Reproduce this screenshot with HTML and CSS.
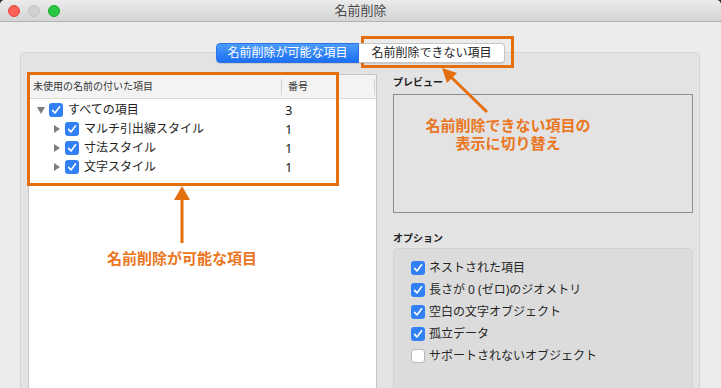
FILE: index.html
```html
<!DOCTYPE html>
<html lang="ja">
<head>
  <meta charset="UTF-8">
  <title>名前削除</title>
  <link rel="stylesheet" href="styles.css">
</head>
<body>
  <div class="window">
    <div class="titlebar">
      <div class="lights">
        <span class="light red"></span>
        <span class="light off"></span>
        <span class="light green"></span>
      </div>
      <div class="title">名前削除</div>
      <div></div>
    </div>

    <div class="tabs">
      <div class="tab active">名前削除が可能な項目</div>
      <div class="tab">名前削除できない項目</div>
    </div>

    <div class="panel">
      <div class="tree">
        <div class="tree-head">
          <div class="col-name">未使用の名前の付いた項目</div>
          <span class="sep"></span>
          <div class="col-num">番号</div>
          <span class="sep"></span>
        </div>
        <div class="rows">
          <div class="row">
            <div class="name lvl0"><span class="tri down"></span><span class="check on"></span>すべての項目</div>
            <div class="num">3</div>
          </div>
          <div class="row">
            <div class="name lvl1"><span class="tri right"></span><span class="check on"></span>マルチ引出線スタイル</div>
            <div class="num">1</div>
          </div>
          <div class="row">
            <div class="name lvl1"><span class="tri right"></span><span class="check on"></span>寸法スタイル</div>
            <div class="num">1</div>
          </div>
          <div class="row">
            <div class="name lvl1"><span class="tri right"></span><span class="check on"></span>文字スタイル</div>
            <div class="num">1</div>
          </div>
        </div>
      </div>

      <div class="side">
        <div class="label">プレビュー</div>
        <div class="preview"></div>
        <div class="label opt">オプション</div>
        <div class="options">
          <div class="opt-row"><span class="check on"></span>ネストされた項目</div>
          <div class="opt-row"><span class="check on"></span>長さが 0 (ゼロ)のジオメトリ</div>
          <div class="opt-row"><span class="check on"></span>空白の文字オブジェクト</div>
          <div class="opt-row"><span class="check on"></span>孤立データ</div>
          <div class="opt-row"><span class="check"></span>サポートされないオブジェクト</div>
        </div>
      </div>
    </div>

    <!-- annotations -->
    <div class="mark-box mark-tree"></div>
    <div class="mark-box mark-tab"></div>
    <svg class="arrows" width="721" height="388" viewBox="0 0 721 388">
      <line x1="182" y1="243" x2="182" y2="197" stroke="#e46f0e" stroke-width="3"/>
      <polygon points="182,186 174,200 190,200" fill="#e46f0e"/>
      <line x1="487" y1="112" x2="451" y2="77" stroke="#e46f0e" stroke-width="3"/>
      <polygon points="442,68 457,73 447,83" fill="#e46f0e"/>
    </svg>
    <div class="note note-tree">名前削除が可能な項目</div>
    <div class="note note-tab">名前削除できない項目の<br>表示に切り替え</div>
  </div>
</body>
</html>
```

FILE: styles.css
```css
body {
  margin: 0;
  background: #2a2a2a;
  font-family: "Noto Sans", "Noto Sans CJK JP", sans-serif;
}
.window {
  position: relative;
  width: 721px;
  height: 388px;
  overflow: hidden;
  background: #ececec;
  border-radius: 5px 5px 0 0;
}

/* title bar */
.titlebar {
  height: 21px;
  border-bottom: 1px solid #b3b3b3;
  background: linear-gradient(#ebebeb, #d4d4d4);
  display: grid;
  grid-template-columns: 1fr auto 1fr;
  align-items: center;
}
.lights {
  display: flex;
  gap: 8px;
  padding-left: 8px;
}
.light {
  width: 12px;
  height: 12px;
  border-radius: 50%;
  box-sizing: border-box;
}
.light.red { background: #fe5f57; border: 1px solid #e2463f; }
.light.off { background: #d0d0d0; border: 1px solid #c2c2c2; }
.light.green { background: #28c840; border: 1px solid #1eaa30; }
.title {
  font-size: 13px;
  line-height: 21px;
  color: #4a4a4a;
}

/* segmented tabs */
.tabs {
  display: flex;
  justify-content: center;
  margin-top: 21px;
  margin-bottom: -11px;
  position: relative;
  z-index: 1;
}
.tab {
  height: 20px;
  box-sizing: border-box;
  font-size: 12px;
  line-height: 18px;
  text-align: center;
  background: #fff;
  color: #222;
  width: 146px;
  border: 1px solid #c6c6c6;
  border-left: none;
  border-radius: 0 4px 4px 0;
  box-shadow: 0 1px 1px rgba(0,0,0,0.12);
}
.tab.active {
  width: 143px;
  background: linear-gradient(#4b9cfb, #1c6ff2);
  color: #fff;
  border: 1px solid #2a72e6;
  border-radius: 4px 0 0 4px;
}

/* main panel */
.panel {
  margin: 0 21px 0 20px;
  background: #e3e3e3;
  border: 1px solid #d4d4d4;
  border-radius: 5px;
  padding: 21px 6px 0 7px;
  display: flex;
  gap: 16px;
  height: 400px;
}

.tree {
  width: 349px;
  height: 360px;
  box-sizing: border-box;
  border: 1px solid #c6c6c6;
  background: #fff;
}
.tree-head {
  display: flex;
  align-items: center;
  height: 23px;
  border-bottom: 1px solid #dadada;
  background: #f3f3f3;
  font-size: 10px;
  line-height: 14px;
  color: #333;
}
.col-name {
  width: 252px;
  padding-left: 4px;
  padding-bottom: 1px;
  box-sizing: border-box;
}
.col-num {
  flex: 1;
  padding-left: 5px;
  padding-bottom: 1px;
}
.sep {
  width: 1px;
  height: 16px;
  background: #d2d2d2;
  margin-right: 1px;
}
.rows {
  padding-top: 1px;
}
.row {
  display: flex;
  align-items: center;
  height: 19px;
  font-size: 12px;
  line-height: 16px;
  color: #1e1e1e;
}
.name {
  width: 253px;
  display: flex;
  align-items: center;
  box-sizing: border-box;
}
.name.lvl0 { padding-left: 8px; }
.name.lvl1 { padding-left: 24px; }
.num {
  padding-left: 3px;
  font-size: 13px;
}
.tri {
  width: 8px;
  height: 8px;
  margin-right: 4px;
  position: relative;
}
.tri.down::before,
.tri.right::before {
  content: "";
  position: absolute;
  width: 0;
  height: 0;
}
.tri.down::before {
  left: 0;
  top: 1px;
  border-left: 4px solid transparent;
  border-right: 4px solid transparent;
  border-top: 7px solid #7d7d7d;
}
.tri.right::before {
  left: 1px;
  top: 0;
  border-top: 4px solid transparent;
  border-bottom: 4px solid transparent;
  border-left: 6px solid #7d7d7d;
}
.check {
  width: 14px;
  height: 14px;
  box-sizing: border-box;
  border-radius: 3px;
  background: #fff;
  border: 1px solid #b8b8b8;
  margin-right: 5px;
  flex: none;
}
.check.on {
  border: none;
  background: #3180f6 url("data:image/svg+xml,%3Csvg xmlns='http://www.w3.org/2000/svg' width='14' height='14'%3E%3Cpolyline points='3.6,7.4 6,9.9 10.6,3.8' fill='none' stroke='white' stroke-width='1.6' stroke-linecap='round' stroke-linejoin='round'/%3E%3C/svg%3E") no-repeat center;
}

/* right side */
.side {
  width: 300px;
}
.label {
  font-size: 10px;
  font-weight: bold;
  line-height: 16px;
  color: #222;
  margin-bottom: 4px;
}
.label.opt {
  margin-top: 17px;
  margin-bottom: 2px;
}
.preview {
  height: 119px;
  box-sizing: border-box;
  border: 1px solid #8e8e8e;
}
.options {
  height: 200px;
  background: #dcdcdc;
  border: 1px solid #d2d2d2;
  border-radius: 5px;
  padding: 8px 0 0 17px;
}
.opt-row {
  display: flex;
  align-items: center;
  height: 22px;
  font-size: 12px;
  line-height: 16px;
  color: #262626;
}
.opt-row .check {
  margin-right: 4px;
}

/* annotations */
.mark-box {
  position: absolute;
  box-sizing: border-box;
  border: 3px solid #e46f0e;
}
.mark-tree {
  left: 27px;
  top: 72px;
  width: 312px;
  height: 114px;
}
.mark-tab {
  left: 361px;
  top: 36px;
  width: 153px;
  height: 32px;
}
.arrows {
  position: absolute;
  left: 0;
  top: 0;
}
.note {
  position: absolute;
  color: #ea7622;
  font-weight: bold;
  font-size: 15px;
  line-height: 18px;
  white-space: nowrap;
}
.note-tree {
  left: 107px;
  top: 249px;
}
.note-tab {
  left: 408px;
  top: 116px;
  width: 200px;
  text-align: center;
}
```
